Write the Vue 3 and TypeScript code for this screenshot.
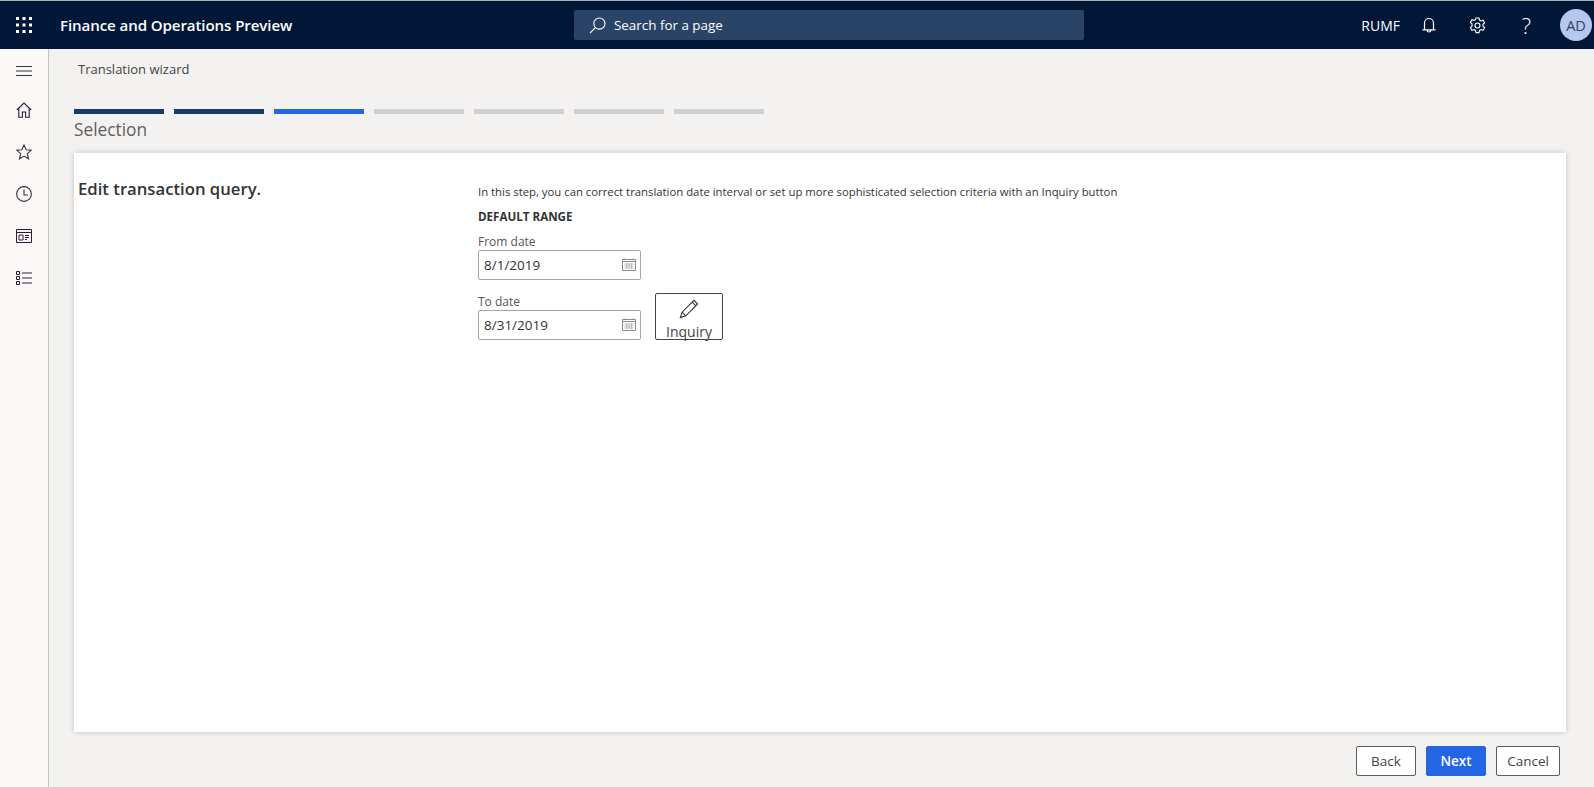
<script setup lang="ts">
const steps = ['done', 'done', 'current', 'todo', 'todo', 'todo', 'todo']

const dates = [
  { label: 'From date', value: '8/1/2019' },
  { label: 'To date', value: '8/31/2019' },
]
</script>

<template>
  <div class="shell">
    <header class="topbar">
      <div class="waffle">
        <svg width="16" height="16" viewBox="0 0 16 16" fill="#fff">
          <rect v-for="n in 9" :key="n" :x="((n - 1) % 3) * 6.5" :y="Math.floor((n - 1) / 3) * 6.5" width="3" height="3" />
        </svg>
      </div>
      <div class="app-name">Finance and Operations Preview</div>
      <div class="search">
        <svg width="17" height="17" viewBox="0 0 18 18" fill="none" stroke="#fff" stroke-width="1.2">
          <circle cx="11" cy="7" r="5.9" />
          <path d="M6.800 11.200 1 17" />
        </svg>
        <span>Search for a page</span>
      </div>
      <div class="top-right">
        <span class="company">RUMF</span>
        <span class="top-cell">
          <svg width="14" height="16" viewBox="0 0 14 16" fill="none" stroke="#fff" stroke-width="1.2">
            <path d="M2.500 12.500V6a4.500 4.500 0 0 1 9 0v6.500M.5 12.800h13M5.200 13.200a1.800 1.800 0 0 0 3.600 0" />
          </svg>
        </span>
        <span class="top-cell">
          <svg width="17" height="17" viewBox="0 0 18 18" fill="none" stroke="#fff" stroke-width="1.2">
            <circle cx="9" cy="9" r="2.600" />
            <path d="M7.400 1h3.200l.5 2.300 1.600.9 2.200-.8 1.600 2.800-1.700 1.600v1.900l1.700 1.600-1.600 2.800-2.200-.8-1.600.9-.5 2.300H7.400l-.5-2.300-1.600-.9-2.200.8-1.600-2.800 1.700-1.600V7.200L1.500 5.600l1.600-2.800 2.200.8 1.600-.9z" />
          </svg>
        </span>
        <span class="top-cell help">?</span>
        <span class="avatar">AD</span>
      </div>
    </header>

    <div class="body">
      <nav class="sidenav">
        <svg class="nav-first" width="16" height="10" viewBox="0 0 16 10" stroke="#333" fill="none">
          <path d="M0 .5h16M0 5h16M0 9.500h16" />
        </svg>
        <svg width="16" height="16" viewBox="0 0 16 16" fill="none" stroke="#2f1b36" stroke-width="1.100">
          <path d="M.8 8 8 1l7.200 7M2.800 6.500v8.700h3.600V10h3.200v5.200h3.600V6.500" />
        </svg>
        <svg width="16" height="16" viewBox="0 0 16 16" fill="none" stroke="#3b3040" stroke-width="1.100">
          <path d="m8 1 2.100 4.800 5.100.5-3.900 3.400 1.200 5.100L8 12.100l-4.500 2.700 1.200-5.100L.8 6.300l5.100-.5z" />
        </svg>
        <svg width="16" height="16" viewBox="0 0 16 16" fill="none" stroke="#3b3040" stroke-width="1.100">
          <circle cx="8" cy="8" r="7.400" />
          <path d="M8 3.500V9H12" />
        </svg>
        <svg width="16" height="16" viewBox="0 0 16 16" fill="none" stroke="#2f1b36" stroke-width="1">
          <path d="M.5 1.500h15v13H.5zM.5 4.500h15M3 7h4v5H3zM9 7.500h4M9 9.500h4M9 11.500h2" />
        </svg>
        <svg width="16" height="16" viewBox="0 0 16 16" fill="none" stroke="#2f1b36" stroke-width="1">
          <path d="M.5 1.500h3v3h-3zM.5 6.500h3v3h-3zM.5 11.500h3v3h-3zM6 3h10M6 8h10M6 13h10" />
        </svg>
      </nav>

      <main class="page">
        <div class="page-title">Translation wizard</div>
        <div class="steps">
          <span v-for="(s, i) in steps" :key="i" class="step" :class="s"></span>
        </div>
        <div class="step-name">Selection</div>

        <section class="card">
          <h2 class="card-left">Edit transaction query.</h2>
          <div class="card-right">
            <p class="hint">In this step, you can correct translation date interval or set up more sophisticated selection criteria with an Inquiry button</p>
            <div class="group-title">DEFAULT RANGE</div>
            <div class="fields">
              <div class="date-stack">
                <div v-for="d in dates" :key="d.label" class="field">
                  <label>{{ d.label }}</label>
                  <div class="date-input">
                    <span>{{ d.value }}</span>
                    <svg class="cal" width="14" height="13" viewBox="0 0 14 13" fill="none" stroke="#8a8a8a">
                      <path d="M.5 1.500h13v11H.5zM.5 3.500h13" />
                      <path d="M3 .5v1.500M11 .5v1.500" />
                      <path d="M2.500 6h9M2.500 8h9M2.500 10h9M4.500 5v6M7 5v6M9.500 5v6" stroke="#bdbdbd" />
                    </svg>
                  </div>
                </div>
              </div>
              <button class="inquiry">
                <svg width="20" height="20" viewBox="0 0 22 22" fill="none" stroke="#333" stroke-width="1.200">
                  <path d="m1.500 20.500 1.800-6L16.500 1.500l4 4L7.500 18.500zM3.300 14.500l4.200 4M14.500 3.500l4 4" />
                </svg>
                <span>Inquiry</span>
              </button>
            </div>
          </div>
        </section>

        <footer class="actions">
          <button class="btn">Back</button>
          <button class="btn primary">Next</button>
          <button class="btn">Cancel</button>
        </footer>
      </main>
    </div>
  </div>
</template>

<style>
html,
body {
  margin: 0;
  overflow: hidden;
}
</style>

<style scoped>
.shell {
  width: 1594px;
  height: 787px;
  display: flex;
  flex-direction: column;
  font-family: "Open Sans", "Noto Sans", sans-serif;
  color: #333;
  background: #f3f2f1;
}

.topbar {
  height: 48px;
  flex: none;
  display: flex;
  align-items: center;
  background: #001737;
  border-top: 1px solid #a8adb3;
  color: #fff;
}
.waffle {
  width: 48px;
  display: flex;
  justify-content: center;
}
.app-name {
  width: 514px;
  margin-left: 12px;
  font-size: 15.100px;
  font-weight: 600;
  letter-spacing: -0.1px;
}
.search {
  width: 510px;
  height: 30px;
  box-sizing: border-box;
  padding-left: 15px;
  display: flex;
  align-items: center;
  gap: 8px;
  background: #2a4468;
  border-radius: 2px;
  font-size: 13.400px;
}
.top-right {
  margin-left: auto;
  display: flex;
  align-items: center;
}
.company {
  margin-right: 4px;
  font-size: 14px;
}
.top-cell {
  width: 49px;
  display: flex;
  align-items: center;
  justify-content: center;
}
.help {
  font-size: 22px;
  font-weight: 300;
}
.avatar {
  width: 32px;
  height: 32px;
  margin: 0 2px 0 9px;
  border-radius: 50%;
  display: flex;
  align-items: center;
  justify-content: center;
  background: #b4c7ef;
  color: #33415c;
  font-size: 14.500px;
}

.body {
  flex: 1;
  display: flex;
  min-height: 0;
}
.sidenav {
  width: 48px;
  flex: none;
  display: flex;
  flex-direction: column;
  align-items: center;
  gap: 26px;
  padding-top: 17px;
  background: #faf9f8;
  border-right: 1px solid #c4c4c4;
}

.page {
  flex: 1;
  min-width: 0;
  display: flex;
  flex-direction: column;
  padding: 0 28px 0 25px;
}
.page-title {
  margin: 11px 0 0 4px;
  font-size: 13px;
  line-height: 18px;
  color: #444;
}
.steps {
  display: flex;
  gap: 10px;
  margin-top: 31px;
}
.step {
  width: 90px;
  height: 5px;
}
.step.done {
  background: #17396f;
}
.step.current {
  background: #2266e3;
}
.step.todo {
  background: #d0d0d0;
}
.step-name {
  margin-top: 4px;
  font-size: 17.300px;
  line-height: 24px;
  color: #605e5c;
}

.card {
  height: 579px;
  margin-top: 11px;
  flex: none;
  box-sizing: border-box;
  display: flex;
  background: #fff;
  box-shadow: 0 0 6px rgba(0, 0, 0, 0.2);
}
.card-left {
  width: 404px;
  margin: 25px 0 0;
  padding-left: 4px;
  box-sizing: border-box;
  flex: none;
  font-size: 16.700px;
  line-height: 22px;
  font-weight: 600;
  color: #333;
}
.card-right {
  padding-top: 31px;
}
.hint {
  margin: 0;
  font-size: 11.330px;
  line-height: 15px;
  color: #333;
}
.group-title {
  margin-top: 10px;
  font-size: 11.600px;
  line-height: 15px;
  font-weight: 700;
  color: #333;
}
.fields {
  display: flex;
  align-items: flex-end;
  gap: 14px;
  margin-top: 10px;
}
.date-stack {
  display: flex;
  flex-direction: column;
  gap: 14px;
}
.field label {
  display: block;
  font-size: 12px;
  line-height: 16px;
  color: #555;
}
.date-input {
  width: 163px;
  height: 30px;
  box-sizing: border-box;
  padding: 0 4px 0 5px;
  display: flex;
  align-items: center;
  justify-content: space-between;
  border: 1px solid #a6a6a6;
  border-radius: 2px;
  font-size: 13.500px;
  color: #333;
}
.cal {
  margin-bottom: 2px;
}
.inquiry {
  width: 68px;
  height: 47px;
  padding: 0;
  display: flex;
  flex-direction: column;
  align-items: center;
  justify-content: flex-start;
  background: #fff;
  border: 1px solid #444;
  border-radius: 2px;
  font-family: inherit;
  font-size: 14px;
  line-height: 15px;
  font-weight: 500;
  color: #444;
}
.inquiry svg {
  flex: none;
  margin-top: 5px;
  margin-bottom: 5px;
}

.actions {
  display: flex;
  justify-content: flex-end;
  gap: 10px;
  margin-top: 14px;
  padding-right: 6px;
}
.btn {
  width: 60px;
  height: 30px;
  padding: 0;
  background: #fff;
  border: 1px solid #605e5c;
  border-radius: 2px;
  font-family: inherit;
  font-size: 13.500px;
  font-weight: 500;
  color: #444;
}
.btn:last-child {
  width: 64px;
}
.btn.primary {
  background: #2266e3;
  border-color: #2266e3;
  color: #fff;
  font-weight: 600;
}
</style>
